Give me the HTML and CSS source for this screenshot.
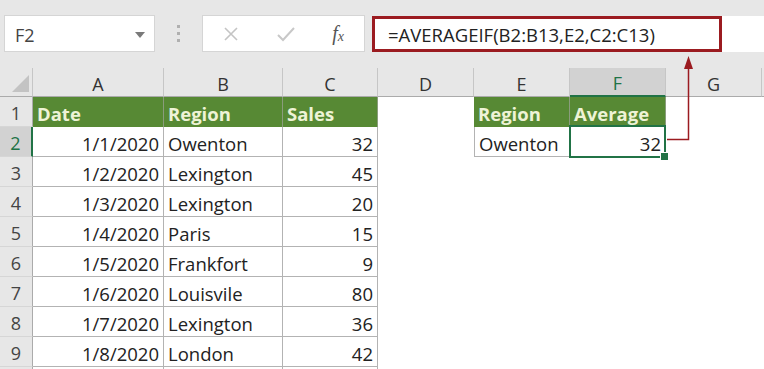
FILE: index.html
```html
<!DOCTYPE html>
<html lang="en">

<head>
    <meta charset="UTF-8">
    <title>AVERAGEIF</title>
    <link rel="stylesheet" href="styles.css">
</head>

<body>
    <div class="toolbar">
        <div class="name-box">
            <span>F2</span>
            <svg class="caret" width="10" height="6" viewBox="0 0 10 6"><path d="M0 0h10L5 6z" fill="#7a7a7a" /></svg>
        </div>
        <div class="grip"><i></i><i></i><i></i></div>
        <div class="fx-buttons">
            <svg width="16" height="16" viewBox="0 0 16 16"><path d="M2 2l12 12M14 2L2 14" stroke="#c4c4c4" stroke-width="1.6" fill="none" /></svg>
            <svg width="18" height="16" viewBox="0 0 18 16"><path d="M1 9l5 5L17 2" stroke="#c8c8c8" stroke-width="2" fill="none" /></svg>
            <span class="fx">f<sub>x</sub></span>
        </div>
        <div class="formula">
            <div class="formula-input">=AVERAGEIF(B2:B13,E2,C2:C13)</div>
        </div>
    </div>

    <div class="sheet">
        <!-- column headers -->
        <div class="corner"></div>
        <div class="ch">A</div>
        <div class="ch">B</div>
        <div class="ch">C</div>
        <div class="ch">D</div>
        <div class="ch">E</div>
        <div class="ch active">F</div>
        <div class="ch">G</div>
        <div class="ch rest"></div>

        <!-- row 1 -->
        <div class="rh">1</div>
        <div class="th">Date</div>
        <div class="th">Region</div>
        <div class="th">Sales</div>
        <div class="c"></div>
        <div class="th">Region</div>
        <div class="th">Average</div>
        <div class="c"></div>
        <div class="c"></div>

        <!-- row 2 -->
        <div class="rh active">2</div>
        <div class="t num">1/1/2020</div>
        <div class="t">Owenton</div>
        <div class="t num">32</div>
        <div class="c"></div>
        <div class="t lead">Owenton</div>
        <div class="t num selected">32</div>
        <div class="c"></div>
        <div class="c"></div>

        <div class="rh">3</div>
        <div class="t num">1/2/2020</div>
        <div class="t">Lexington</div>
        <div class="t num">45</div>
        <div class="c"></div><div class="c"></div><div class="c"></div><div class="c"></div><div class="c"></div>

        <div class="rh">4</div>
        <div class="t num">1/3/2020</div>
        <div class="t">Lexington</div>
        <div class="t num">20</div>
        <div class="c"></div><div class="c"></div><div class="c"></div><div class="c"></div><div class="c"></div>

        <div class="rh">5</div>
        <div class="t num">1/4/2020</div>
        <div class="t">Paris</div>
        <div class="t num">15</div>
        <div class="c"></div><div class="c"></div><div class="c"></div><div class="c"></div><div class="c"></div>

        <div class="rh">6</div>
        <div class="t num">1/5/2020</div>
        <div class="t">Frankfort</div>
        <div class="t num">9</div>
        <div class="c"></div><div class="c"></div><div class="c"></div><div class="c"></div><div class="c"></div>

        <div class="rh">7</div>
        <div class="t num">1/6/2020</div>
        <div class="t">Louisvile</div>
        <div class="t num">80</div>
        <div class="c"></div><div class="c"></div><div class="c"></div><div class="c"></div><div class="c"></div>

        <div class="rh">8</div>
        <div class="t num">1/7/2020</div>
        <div class="t">Lexington</div>
        <div class="t num">36</div>
        <div class="c"></div><div class="c"></div><div class="c"></div><div class="c"></div><div class="c"></div>

        <div class="rh">9</div>
        <div class="t num">1/8/2020</div>
        <div class="t">London</div>
        <div class="t num">42</div>
        <div class="c"></div><div class="c"></div><div class="c"></div><div class="c"></div><div class="c"></div>

        <!-- row 10, only its top edge is in view -->
        <div class="rh"></div>
        <div class="t"></div>
        <div class="t"></div>
        <div class="t"></div>
        <div class="c"></div><div class="c"></div><div class="c"></div><div class="c"></div><div class="c"></div>
    </div>

    <!-- callout arrow from F2 up to the formula -->
    <svg class="callout" width="764" height="369" viewBox="0 0 764 369">
        <polyline points="667,139.5 688.5,139.5 688.5,66" fill="none" stroke="#9b1b20" stroke-width="1.5" />
        <path d="M688.5 56L684 69h9z" fill="#9b1b20" />
    </svg>
</body>

</html>
```

FILE: styles.css
```css
* {
    box-sizing: border-box;
}

html,
body {
    margin: 0;
    height: 369px;
    overflow: hidden;
}

body {
    position: relative;
    background: #e7e7e7;
    font-family: "Open Sans", "Liberation Sans", sans-serif;
    color: #222;
}

.toolbar {
    display: flex;
    align-items: flex-start;
    height: 68px;
    padding: 15px 0 0 4px;
}

.name-box {
    display: flex;
    align-items: center;
    justify-content: space-between;
    width: 151px;
    height: 37px;
    padding: 2px 9px 0 10px;
    background: #fff;
    border: 1px solid #d5d5d5;
    font-size: 18px;
    color: #444;
}

.grip {
    display: flex;
    flex-direction: column;
    align-items: center;
    justify-content: center;
    gap: 4px;
    width: 47px;
    height: 37px;
}

.grip i {
    width: 3px;
    height: 3px;
    background: #b0b0b0;
}

.fx-buttons {
    display: flex;
    align-items: center;
    justify-content: space-between;
    width: 163px;
    height: 37px;
    padding: 0 20px 0 20px;
    background: #fff;
    border: 1px solid #d5d5d5;
}

.fx {
    font-family: "Liberation Serif", serif;
    font-style: italic;
    font-size: 20px;
    color: #555;
}

.fx sub {
    font-size: 14px;
    vertical-align: -1px;
}

.formula {
    flex: 1;
    height: 36px;
    margin: 1px 0 0 7px;
    background: #fff;
}

.formula-input {
    width: 350px;
    height: 36px;
    padding: 1px 0 0 13px;
    border: 3px solid #9b1b20;
    font-size: 18.5px;
    line-height: 29px;
    color: #222;
}

.sheet {
    display: grid;
    grid-template-columns: 33px 131px 119px 95px 96px 96px 96px 96px 1fr;
    grid-template-rows: 29px repeat(10, 30px);
    background: #fff;
    font-size: 18.5px;
}

.sheet > div {
    display: flex;
    align-items: center;
    padding: 3px 4px 0;
    white-space: nowrap;
}

.corner {
    position: relative;
    background: #e7e7e7;
    border-right: 1px solid #c6c6c6;
    border-bottom: 1px solid #ababab;
}

.corner::after {
    content: "";
    position: absolute;
    right: 3px;
    bottom: 4px;
    border-left: 17px solid transparent;
    border-bottom: 17px solid #c3c3c3;
}

.ch {
    justify-content: center;
    background: #e7e7e7;
    border-right: 1px solid #c6c6c6;
    border-bottom: 1px solid #ababab;
    color: #333;
    font-size: 18px;
}

.ch.rest {
    border-right: 0;
}

.ch.active {
    background: #d2d2d2;
    color: #217346;
    border-bottom: 2px solid #217346;
}

.rh {
    justify-content: center;
    background: #e7e7e7;
    border-right: 1px solid #ababab;
    border-bottom: 1px solid #d6d6d6;
    color: #444;
    font-size: 18px;
}

.rh.active {
    background: #d2d2d2;
    color: #217346;
    border-right: 2px solid #217346;
}

.th {
    background: #578934;
    color: #eef3d6;
    font-weight: bold;
    border-right: 1px solid #8a9c7c;
}

.t {
    border-right: 1px solid #b3b3b3;
    border-bottom: 1px solid #b3b3b3;
}

.t.lead {
    border-left: 1px solid #b3b3b3;
}

.num {
    justify-content: flex-end;
}

.selected {
    position: relative;
}

.selected::after {
    content: "";
    position: absolute;
    inset: -2px -1px -2px -1px;
    border: 2px solid #217346;
}

.selected::before {
    content: "";
    position: absolute;
    right: -4px;
    bottom: -5px;
    width: 7px;
    height: 7px;
    background: #217346;
    border: 1px solid #fff;
    z-index: 1;
}

.callout {
    position: absolute;
    top: 0;
    left: 0;
    pointer-events: none;
}
```
